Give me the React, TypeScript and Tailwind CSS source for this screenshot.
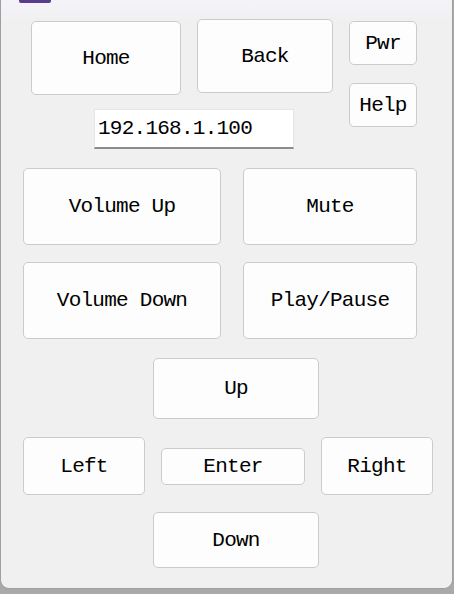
const font = { fontFamily: '"Liberation Mono", "DejaVu Sans Mono", monospace' };

function Btn({ label, className }: { label: string; className: string }) {
  return (
    <button
      type="button"
      className={`flex shrink-0 items-center justify-center rounded-[5px] border border-[#cbcbcb] bg-[#fdfdfd] text-[21px] leading-none tracking-[-0.75px] text-black ${className}`}
    >
      {label}
    </button>
  );
}

export default function App() {
  return (
    <div className="h-[594px] w-[454px] overflow-hidden bg-[#a9a9a9]" style={font}>
      <div className="relative h-[589px] w-[453px] rounded-b-[9px] border border-t-0 border-[#9f9f9f] bg-[#f0f0f0]">
        {/* title bar remnant */}
        <div className="absolute inset-x-0 top-0 h-[18px] bg-gradient-to-b from-[#f4f3f8] to-[#f1f1f3]" />
        <div className="absolute left-[18px] top-0 h-[3px] w-[32px] rounded-b-[2px] bg-[#5a3b8e]" />

        <div className="relative flex flex-col pt-[19px]">
          {/* top block */}
          <div className="flex items-start pl-[30px]">
            <div className="flex flex-col">
              <div className="flex items-start">
                <Btn label="Home" className="mt-[2px] h-[74px] w-[150px]" />
                <Btn label="Back" className="ml-[16px] h-[74px] w-[136px]" />
              </div>
              <div className="ml-[63px] mt-[14px] flex h-[40px] w-[200px] items-center border border-b-2 border-[#e6e6e6] border-b-[#8c8c8c] bg-white pl-[3px] text-[21px] tracking-[-0.75px] text-black">
                192.168.1.100
              </div>
            </div>
            <div className="ml-[16px] flex flex-col">
              <Btn label="Pwr" className="mt-[2px] h-[44px] w-[68px]" />
              <Btn label="Help" className="mt-[18px] h-[44px] w-[68px]" />
            </div>
          </div>

          {/* volume rows */}
          <div className="mt-[19px] flex gap-[22px] pl-[22px]">
            <Btn label="Volume Up" className="h-[77px] w-[198px]" />
            <Btn label="Mute" className="h-[77px] w-[174px]" />
          </div>
          <div className="mt-[17px] flex gap-[22px] pl-[22px]">
            <Btn label="Volume Down" className="h-[77px] w-[198px]" />
            <Btn label="Play/Pause" className="h-[77px] w-[174px]" />
          </div>

          {/* d-pad */}
          <div className="mt-[19px] flex pl-[152px]">
            <Btn label="Up" className="h-[61px] w-[166px]" />
          </div>
          <div className="mt-[18px] flex items-center pl-[22px]">
            <Btn label="Left" className="h-[58px] w-[122px]" />
            <Btn label="Enter" className="ml-[16px] h-[37px] w-[144px]" />
            <Btn label="Right" className="ml-[16px] h-[58px] w-[112px]" />
          </div>
          <div className="mt-[17px] flex pl-[152px]">
            <Btn label="Down" className="h-[56px] w-[166px]" />
          </div>
        </div>
      </div>
    </div>
  );
}
